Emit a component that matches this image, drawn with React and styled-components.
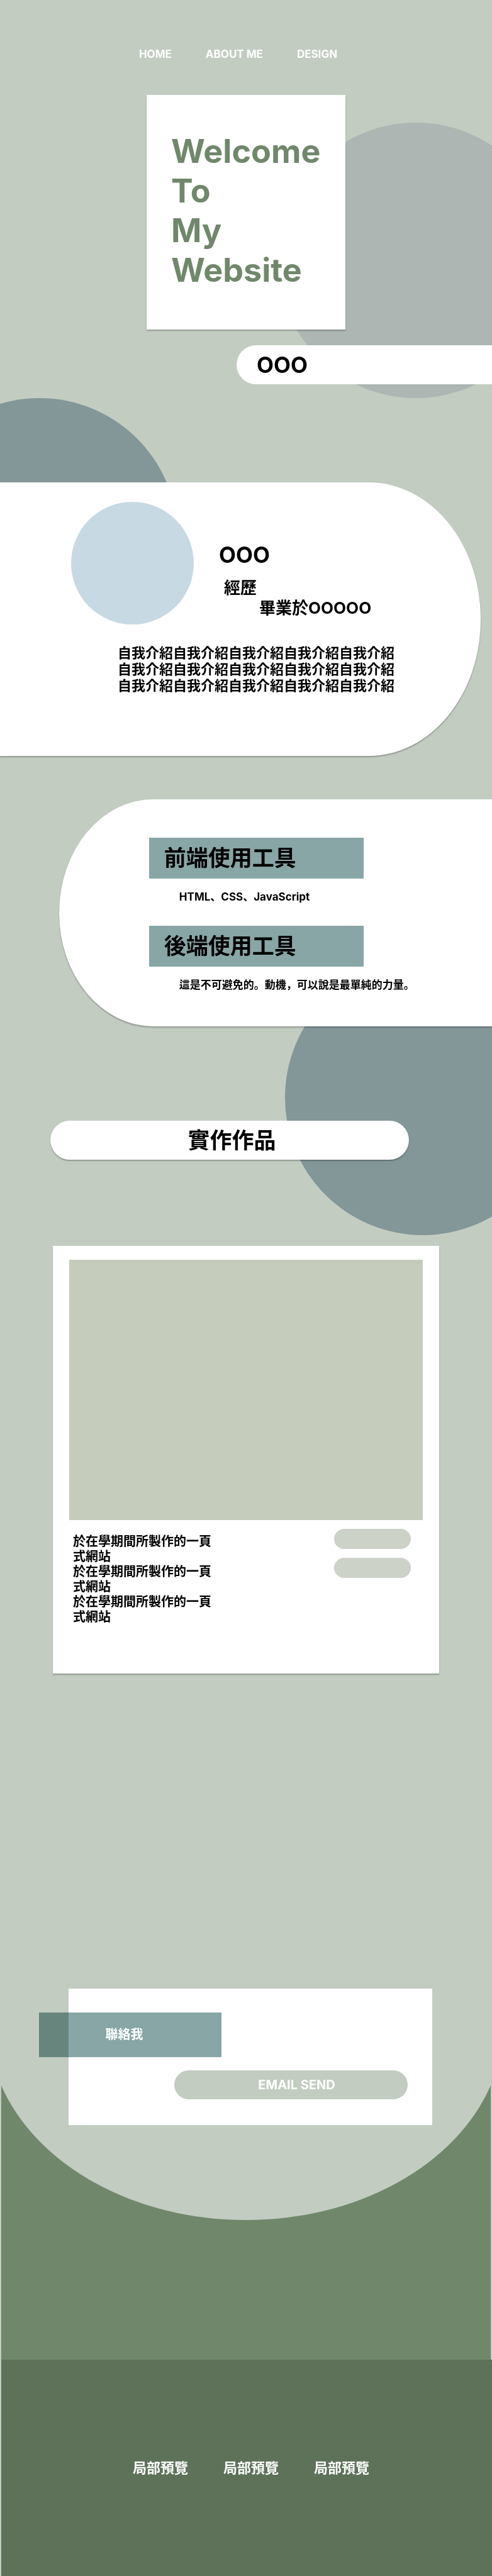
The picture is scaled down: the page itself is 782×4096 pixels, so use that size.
import React from 'react';
import styled, { createGlobalStyle } from 'styled-components';

const color = {
  sage: '#c2ccc1',
  moss: '#70876b',
  forest: '#5d7259',
  slate: '#839698',
  mist: '#adb6b2',
  teal: '#87a6a5',
  sky: '#c7d9e3',
};

const GlobalStyle = createGlobalStyle`
  *, *::before, *::after { box-sizing: border-box; }
  body {
    margin: 0;
    background: ${color.sage};
    color: #000;
    font-family: Inter, "Noto Sans CJK JP", sans-serif;
    font-weight: 700;
  }
  h1, h2, h3, p, ul { margin: 0; padding: 0; font-size: inherit; font-weight: inherit; }
  a { color: inherit; text-decoration: none; }
`;

const Page = styled.div`
  position: relative;
  overflow: hidden;
  background: ${color.sage};
`;

const Circle = styled.div`
  position: absolute;
  width: 438px;
  height: 438px;
  border-radius: 50%;
  background: ${(p) => p.$fill};
`;

const HeroCircle = styled(Circle)`top: 195px; right: -98px;`;
const AboutCircle = styled(Circle)`top: 633px; left: -156px;`;
const WorkCircle = styled(Circle)`top: -106px; right: -109px;`;

const Nav = styled.nav`
  position: relative;
  display: flex;
  justify-content: center;
  gap: 54px;
  padding: 76px 25px 0 0;
  color: #fff;
  font-size: 17px;
  line-height: 20px;
`;

const Hero = styled.header`
  position: relative;
  display: flex;
  flex-direction: column;
  align-items: center;
  padding-top: 55px;
`;

const HeroCard = styled.div`
  width: 316px;
  min-height: 373px;
  padding: 58px 0 0 39px;
  background: #fff;
  box-shadow: 0 2px 2px rgba(0, 0, 0, 0.25);
`;

const HeroTitle = styled.h1`
  width: 240px;
  color: ${color.moss};
  font-size: 52px;
  line-height: 63px;
`;

const NameTab = styled.p`
  align-self: stretch;
  margin: 25px 0 0 calc(50% - 15px);
  padding-left: 32px;
  border-radius: 31px 0 0 31px;
  background: #fff;
  font-size: 35px;
  line-height: 62px;
`;

const About = styled.section`
  position: relative;
  min-height: 435px;
  margin: 156px 18px 0 0;
  padding: 31px 24px 0 113px;
  border-radius: 0 178px 178px 0 / 0 217px 217px 0;
  background: #fff;
  box-shadow: 0 2px 2px rgba(0, 0, 0, 0.25);
`;

const Profile = styled.div`
  display: flex;
  gap: 40px;
`;

const Avatar = styled.div`
  width: 195px;
  height: 195px;
  border-radius: 50%;
  background: ${color.sky};
`;

const ProfileText = styled.div`
  padding-top: 63px;
  font-size: 26px;
  line-height: 32px;
`;

const Name = styled.h2`
  margin-bottom: 16px;
  font-size: 35px;
  line-height: 42px;
`;

const History = styled.h3`padding-left: 8px;`;
const School = styled.p`padding-left: 64px;`;

const Intro = styled.p`
  margin: 32px 0 0 74px;
  font-size: 22px;
  line-height: 26px;
  white-space: pre-line;
`;

const Skills = styled.section`
  position: relative;
  z-index: 1;
  min-height: 361px;
  margin: 69px 0 0 12%;
  padding: 61px 24px 0 143px;
  border-radius: 150px 0 0 150px / 181px 0 0 181px;
  background: #fff;
  box-shadow: 0 2px 2px rgba(0, 0, 0, 0.25);
`;

const SkillTitle = styled.h2`
  max-width: 341px;
  padding-left: 24px;
  background: ${color.teal};
  font-size: 35px;
  line-height: 65px;
`;

const SkillText = styled.p`
  padding: 19px 0 36px 48px;
  font-size: 17px;
  line-height: 20px;
`;

const Work = styled.section`
  position: relative;
  padding: 150px 84px 0 80px;
`;

const WorkTitle = styled.h2`
  position: relative;
  margin-right: 48px;
  padding-left: 7px;
  border-radius: 31px;
  background: #fff;
  box-shadow: 0 2px 2px rgba(0, 0, 0, 0.25);
  font-size: 35px;
  line-height: 62px;
  text-align: center;
`;

const ProjectCard = styled.article`
  position: relative;
  min-height: 680px;
  margin: 137px 0 0 4px;
  padding: 22px 26px 0;
  background: #fff;
  box-shadow: 0 2px 2px rgba(0, 0, 0, 0.25);
`;

const Preview = styled.div`
  height: 414px;
  background: #c5ccbc;
`;

const ProjectInfo = styled.div`
  display: flex;
  justify-content: space-between;
  padding: 14px 19px 0 6px;
`;

const ProjectText = styled.ul`
  width: 230px;
  padding-top: 8px;
  font-size: 20px;
  line-height: 24px;
  list-style: none;
`;

const Actions = styled.div`
  display: flex;
  flex-direction: column;
  gap: 14px;
`;

const ActionButton = styled.button`
  width: 122px;
  height: 32px;
  border: 0;
  border-radius: 16px;
  background: #cdd2c8;
`;

const Closing = styled.div`
  position: relative;
  margin-top: 501px;
`;

const Hill = styled.svg`
  position: absolute;
  left: 2px;
  bottom: 0;
  width: calc(100% - 4px);
  height: 436px;
`;

const Contact = styled.section`
  position: relative;
  padding: 0 95px 373px 109px;
`;

const ContactCard = styled.form`
  display: flex;
  flex-direction: column;
  min-height: 216px;
  padding: 38px 39px 41px 0;
  background: #fff;
`;

const ContactLabel = styled.h2`
  width: 290px;
  margin-left: -47px;
  padding-right: 19px;
  background: ${color.teal};
  mix-blend-mode: multiply;
  line-height: 70px;
  text-align: center;
`;

const LabelText = styled.span`
  color: #fff;
  font-size: 20px;
`;

const SendButton = styled.button`
  align-self: flex-end;
  width: 371px;
  height: 46px;
  margin-top: 21px;
  padding: 0 0 0 18px;
  border: 0;
  border-radius: 23px;
  background: ${color.sage};
  color: #fff;
  font: inherit;
  font-size: 20px;
`;

const Footer = styled.footer`
  display: flex;
  justify-content: center;
  gap: 56px;
  min-height: 345px;
  margin-left: 2px;
  padding: 159px 0 0 14px;
  background: ${color.forest};
  color: #fff;
  font-size: 22px;
  line-height: 26px;
`;

const introLine = '自我介紹'.repeat(5);
const projects = [1, 2, 3];

export default function App() {
  return (
    <Page>
      <GlobalStyle />
      <HeroCircle $fill={color.mist} />
      <AboutCircle $fill={color.slate} />
      <Nav>
        <a href="#home">HOME</a>
        <a href="#about">ABOUT ME</a>
        <a href="#design">DESIGN</a>
      </Nav>
      <Hero id="home">
        <HeroCard>
          <HeroTitle>Welcome To<br />My Website</HeroTitle>
        </HeroCard>
        <NameTab>OOO</NameTab>
      </Hero>

      <About id="about">
        <Profile>
          <Avatar />
          <ProfileText>
            <Name>OOO</Name>
            <History>經歷</History>
            <School>畢業於OOOOO</School>
          </ProfileText>
        </Profile>
        <Intro>{[introLine, introLine, introLine].join('\n')}</Intro>
      </About>

      <Skills>
        <SkillTitle>前端使用工具</SkillTitle>
        <SkillText>HTML、CSS、JavaScript</SkillText>
        <SkillTitle>後端使用工具</SkillTitle>
        <SkillText>這是不可避免的。動機，可以說是最單純的力量。</SkillText>
      </Skills>

      <Work id="design">
        <WorkCircle $fill={color.slate} />
        <WorkTitle>實作作品</WorkTitle>
        <ProjectCard>
          <Preview />
          <ProjectInfo>
            <ProjectText>
              {projects.map((n) => (
                <li key={n}>於在學期間所製作的一頁式網站</li>
              ))}
            </ProjectText>
            <Actions>
              <ActionButton type="button" />
              <ActionButton type="button" />
            </Actions>
          </ProjectInfo>
        </ProjectCard>
      </Work>

      <Closing>
        <Hill viewBox="0 0 778 436" preserveAspectRatio="none" aria-hidden="true">
          <path d="M0 0 A410 313 0 0 0 778 0 V436 H0 Z" fill={color.moss} />
        </Hill>
        <Contact>
          <ContactCard onSubmit={(e) => e.preventDefault()}>
            <ContactLabel><LabelText>聯絡我</LabelText></ContactLabel>
            <SendButton type="submit">EMAIL SEND</SendButton>
          </ContactCard>
        </Contact>
      </Closing>

      <Footer>
        <a href="#home">局部預覽</a>
        <a href="#about">局部預覽</a>
        <a href="#design">局部預覽</a>
      </Footer>
    </Page>
  );
}
